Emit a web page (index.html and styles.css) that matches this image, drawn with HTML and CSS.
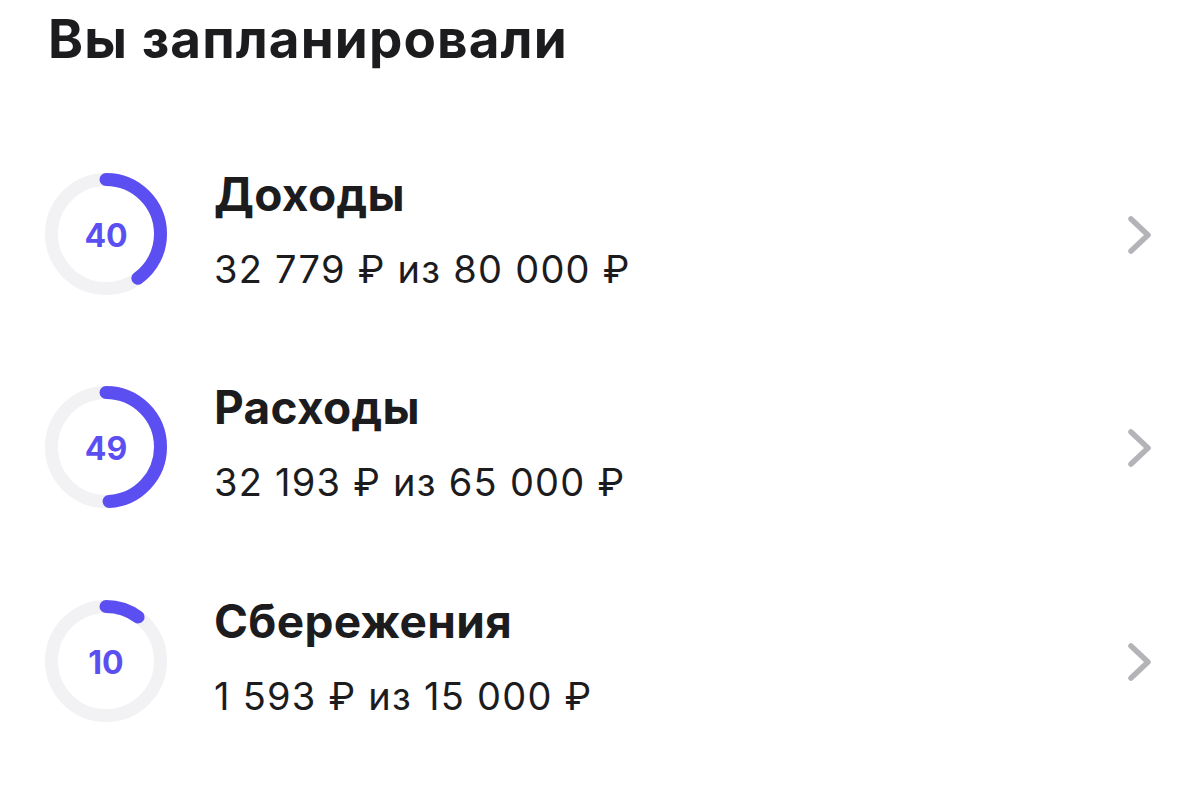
FILE: index.html
```html
<!DOCTYPE html>
<html lang="ru">
<head>
<meta charset="utf-8">
<title>Вы запланировали</title>
<link rel="stylesheet" href="styles.css">
</head>
<body>
<main class="page">
  <h1 class="heading">Вы запланировали</h1>
  <ul class="plans">
    <li class="plan">
      <div class="ring">
        <svg class="ring-svg" viewBox="0 0 122 122" width="122" height="122">
          <circle class="ring-track" cx="61" cy="61" r="54.5"/>
          <circle class="ring-bar" cx="61" cy="61" r="54.5" stroke-dasharray="136.97 400"/>
        </svg>
        <span class="ring-value">40</span>
      </div>
      <div class="plan-text">
        <div class="plan-title">Доходы</div>
        <div class="plan-amount">32 779 ₽ из 80 000 ₽</div>
      </div>
      <svg class="chevron" viewBox="0 0 26 40" width="26" height="40">
        <polyline points="4,4 21,20 4,36"/>
      </svg>
    </li>
    <li class="plan">
      <div class="ring">
        <svg class="ring-svg" viewBox="0 0 122 122" width="122" height="122">
          <circle class="ring-track" cx="61" cy="61" r="54.5"/>
          <circle class="ring-bar" cx="61" cy="61" r="54.5" stroke-dasharray="167.8 400"/>
        </svg>
        <span class="ring-value">49</span>
      </div>
      <div class="plan-text">
        <div class="plan-title">Расходы</div>
        <div class="plan-amount">32 193 ₽ из 65 000 ₽</div>
      </div>
      <svg class="chevron" viewBox="0 0 26 40" width="26" height="40">
        <polyline points="4,4 21,20 4,36"/>
      </svg>
    </li>
    <li class="plan">
      <div class="ring">
        <svg class="ring-svg" viewBox="0 0 122 122" width="122" height="122">
          <circle class="ring-track" cx="61" cy="61" r="54.5"/>
          <circle class="ring-bar" cx="61" cy="61" r="54.5" stroke-dasharray="34.24 400"/>
        </svg>
        <span class="ring-value">10</span>
      </div>
      <div class="plan-text">
        <div class="plan-title">Сбережения</div>
        <div class="plan-amount">1 593 ₽ из 15 000 ₽</div>
      </div>
      <svg class="chevron" viewBox="0 0 26 40" width="26" height="40">
        <polyline points="4,4 21,20 4,36"/>
      </svg>
    </li>
  </ul>
</main>
</body>
</html>
```

FILE: styles.css
```css
* { box-sizing: border-box; }

html, body {
  margin: 0;
  padding: 0;
  background: #ffffff;
}

body {
  font-family: Inter, "Noto Sans", "Liberation Sans", sans-serif;
  color: #1c1c1e;
}

.page {
  padding: 9px 47px 0 45px;
}

.heading {
  margin: 0 0 0 3px;
  font-size: 53px;
  line-height: 60px;
  font-weight: 700;
  letter-spacing: 1.1px;
}

.plans {
  list-style: none;
  margin: 58px 0 0 0;
  padding: 0;
}

.plan {
  height: 213.5px;
  display: flex;
  align-items: center;
}

.ring {
  position: relative;
  width: 122px;
  height: 122px;
  flex: 0 0 122px;
}

.ring-svg {
  display: block;
  transform: rotate(-90deg);
}

.ring-track {
  fill: none;
  stroke: #f2f2f5;
  stroke-width: 13;
}

.ring-bar {
  fill: none;
  stroke: #5c4ff2;
  stroke-width: 13;
  stroke-linecap: round;
}

.ring-value {
  position: absolute;
  inset: 0;
  display: flex;
  align-items: center;
  justify-content: center;
  font-size: 32px;
  font-weight: 700;
  color: #5c4ff2;
  padding-top: 3px;
}

.plan-text {
  flex: 1;
  margin-left: 47px;
  margin-top: -10px;
}

.plan-title {
  font-size: 46px;
  line-height: 56px;
  font-weight: 700;
  letter-spacing: 0.3px;
}

.plan-amount {
  margin-top: 24px;
  font-size: 38px;
  line-height: 46px;
  font-weight: 400;
  letter-spacing: 1.25px;
}

.chevron {
  flex: 0 0 26px;
  margin-top: 2px;
}

.chevron polyline {
  fill: none;
  stroke: #b4b4b8;
  stroke-width: 5.5;
  stroke-linecap: round;
  stroke-linejoin: round;
}
```
